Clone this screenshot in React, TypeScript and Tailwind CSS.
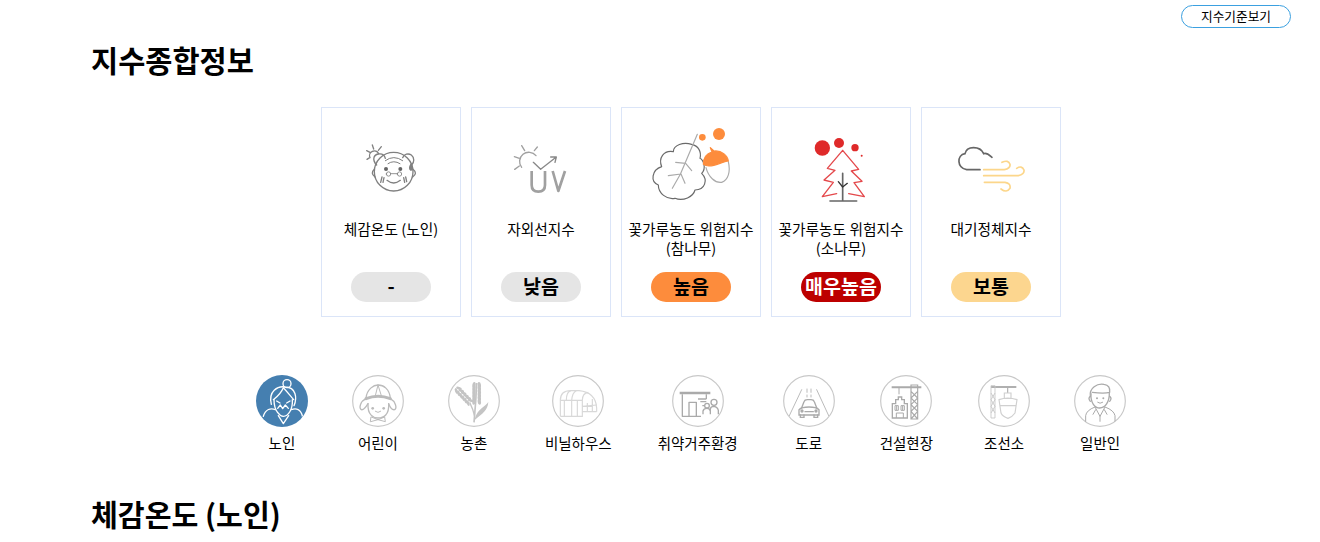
import type { ReactNode } from 'react'

const FONT = "font-['Noto_Sans_CJK_KR','Noto_Sans',sans-serif]"

function ElderFace() {
  return (
    <svg width="120" height="80" viewBox="33 60 360 240" fill="none" stroke="#808080" strokeWidth="4" strokeLinecap="round" strokeLinejoin="round">
      <circle cx="221" cy="200" r="58" />
      <path d="M170 180C156 165 160 150 175 147C188 145 194 152 196 160" />
      <path d="M248 158C252 147 265 144 274 150C284 158 283 172 275 180" />
      <path d="M196 167Q221 148 248 167M204 176Q221 164 240 176" strokeWidth="3" />
      <path d="M163 193Q150 205 165 216M279 193Q294 205 278 216" />
      <path d="M150 158A14 14 0 0 1 176 146M140 137L150 142M157 120L161 132M184 125L175 136M141 163L150 157" />
      <path d="M273 177Q265 190 273 196Q281 190 273 177Z" fill="#808080" />
      <circle cx="198" cy="192" r="6" fill="#666" stroke="none" />
      <circle cx="241" cy="192" r="6" fill="#666" stroke="none" />
      <path d="M199 207A6 6 0 0 1 212 207A6 6 0 0 1 199 207ZM232 207A6 6 0 0 1 245 207A6 6 0 0 1 232 207ZM212 206H232" strokeWidth="2.5" />
      <path d="M201 226Q221 242 241 226M186 216L182 232M192 218L189 232M251 218L254 232M257 216L260 230" />
    </svg>
  )
}

function UvSun() {
  return (
    <svg width="120" height="80" viewBox="483 60 360 240" fill="none" stroke="#a0a0a0" strokeWidth="4" strokeLinecap="round" strokeLinejoin="round">
      <path d="M605 187A26 26 0 0 1 648 152" />
      <path d="M605 122L614 137M652 126L643 137M583 155L598 160M584 193L598 183" />
      <path d="M640 172L662 193L708 157M692 156H709L705 172" stroke="#888" />
      <path d="M635 198V240Q635 260 655 260Q675 260 675 240V198M698 198L715 258L735 198" strokeWidth="8" strokeLinecap="butt" />
    </svg>
  )
}

function OakLeaf() {
  return (
    <svg width="120" height="80" viewBox="33 60 360 240" fill="none" stroke="#777" strokeWidth="3.5" strokeLinecap="round" strokeLinejoin="round">
      <path d="M215 118C190 110 160 120 160 140C130 135 115 160 125 185C95 195 90 230 115 240C115 265 140 285 165 280C190 290 220 275 225 255C255 255 265 225 245 205C260 190 250 165 240 160C245 140 235 122 215 118Z" stroke="#6a6a6a" fill="#fff" />
      <path d="M232 88L181 208L157 250M167 172L197 175L215 197M145 212L183 207L195 235" stroke="#aaa" />
      <path d="M258 188C265 215 285 235 305 232C325 225 332 200 325 170" stroke="#aaa" fill="#fff" />
      <path d="M250 178C250 155 262 145 276 141L271 128L282 138C305 135 323 152 325 168C300 172 270 192 250 178Z" fill="#fd8c3c" stroke="#fd8c3c" />
      <circle cx="297" cy="87" r="18" fill="#fd8c3c" stroke="none" />
      <circle cx="247" cy="97" r="10" fill="#fd8c3c" stroke="none" />
    </svg>
  )
}

function PineTree() {
  return (
    <svg width="120" height="80" viewBox="483 60 360 240" fill="none" strokeLinecap="round" strokeLinejoin="round">
      <circle cx="607" cy="129" r="23" fill="#df2a2a" />
      <circle cx="657" cy="114" r="15" fill="#df2a2a" />
      <circle cx="705" cy="128" r="11" fill="#df2a2a" />
      <circle cx="725" cy="152" r="3" fill="#df2a2a" />
      <path d="M668 136L716 193L694 198L726 229L702 233L733 275L686 266M650 266L607 275L640 232L612 225L645 196L622 190L668 136" stroke="#e4484b" strokeWidth="4" />
      <path d="M668 205V288M630 288H710" stroke="#666" strokeWidth="5" />
      <path d="M655 230L668 246L682 235" stroke="#333" strokeWidth="4" />
    </svg>
  )
}

function WindCloud() {
  return (
    <svg width="120" height="80" viewBox="48 60 360 240" fill="none" strokeWidth="5" strokeLinecap="round">
      <path d="M195 194H155C125 190 125 150 150 146C155 122 195 122 206 146C216 142 225 152 231 157" stroke="#666" />
      <path d="M206 194H268Q287 190 285 178Q280 163 261 172M206 212H310Q329 208 327 195Q320 180 305 190M208 232H270Q288 235 285 250Q275 265 258 252" stroke="#fcd68a" />
    </svg>
  )
}

const CARDS: { label: ReactNode; grade: string; pill: string; icon: ReactNode }[] = [
  { label: '체감온도 (노인)', grade: '-', pill: 'bg-[#e5e5e5] text-black', icon: <ElderFace /> },
  { label: '자외선지수', grade: '낮음', pill: 'bg-[#e5e5e5] text-black', icon: <UvSun /> },
  { label: <>꽃가루농도 위험지수<br />(참나무)</>, grade: '높음', pill: 'bg-[#fd8c3c] text-black', icon: <OakLeaf /> },
  { label: <>꽃가루농도 위험지수<br />(소나무)</>, grade: '매우높음', pill: 'bg-[#bd0000] text-white', icon: <PineTree /> },
  { label: '대기정체지수', grade: '보통', pill: 'bg-[#fcd68f] text-black', icon: <WindCloud /> },
]

function Elder() {
  return (
    <g stroke="#fff" strokeWidth="4" fill="none" strokeLinecap="round" strokeLinejoin="round">
      <circle cx="123" cy="52" r="12" />
      <path d="M76 114C66 75 95 58 118 62C150 62 154 95 144 118" />
      <path d="M112 64C105 82 92 92 82 100M112 64C124 76 134 90 143 100" />
      <path d="M84 100C84 135 103 150 112 150C126 150 141 130 139 100" />
      <path d="M92 104L102 110M132 104L122 110" />
      <path d="M95 126L103 116L110 127L118 116L127 126" />
      <path d="M52 150C58 128 75 124 88 130M170 152C165 128 150 124 136 130M97 148L112 172L128 148" />
    </g>
  )
}

function Child() {
  return (
    <g stroke="#bbb" strokeWidth="4" fill="none" strokeLinecap="round" strokeLinejoin="round">
      <path d="M362 95C365 68 385 56 398 56C415 56 432 68 435 95" />
      <path d="M398 56L390 88M398 56L408 88" strokeWidth="3" />
      <path d="M362 97Q398 82 435 97" strokeWidth="9" />
      <path d="M362 97C345 105 340 125 348 130C355 132 362 122 368 112M435 97C450 105 456 125 448 130C440 132 434 122 430 112" />
      <path d="M368 112C366 146 385 155 398 155C415 155 432 145 430 112" />
      <circle cx="382" cy="126" r="4" fill="#bbb" stroke="none" />
      <circle cx="415" cy="126" r="4" fill="#bbb" stroke="none" />
      <path d="M390 135Q398 142 406 135" strokeWidth="3" />
      <path d="M378 152L398 160L418 152L420 166L398 160L376 166Z" strokeWidth="3" />
    </g>
  )
}

function Wheat() {
  const steps = [0, 1, 2, 3, 4, 5]
  return (
    <g fill="#c4c4c4" stroke="none">
      <path d="M689 168C692 135 695 105 697 50" stroke="#c4c4c4" strokeWidth="5" fill="none" />
      {steps.map((i) => (
        <g key={i}>
          <ellipse cx={689} cy={56 + i * 10} rx="5" ry="9" transform={`rotate(8 689 ${56 + i * 10})`} />
          <ellipse cx={705} cy={56 + i * 10} rx="5" ry="9" transform={`rotate(-8 705 ${56 + i * 10})`} />
          <ellipse cx={640 + i * 7 + 4} cy={70 + i * 7.3 - 4} rx="9" ry="4" transform={`rotate(20 ${644 + i * 7} ${66 + i * 7.3})`} />
          <ellipse cx={640 + i * 7 - 4} cy={70 + i * 7.3 + 4} rx="9" ry="4" transform={`rotate(70 ${636 + i * 7} ${74 + i * 7.3})`} />
        </g>
      ))}
      <path d="M676 108C682 120 688 135 691 150" stroke="#c4c4c4" strokeWidth="4" fill="none" />
      <path d="M692 155C702 126 722 122 732 107C730 132 714 142 692 160Z" />
    </g>
  )
}

function Greenhouse() {
  return (
    <g stroke="#d8d8d8" strokeWidth="3.5" fill="none">
      <path d="M94 150V102Q94 73 125 73H150Q200 78 203 125V136" />
      <path d="M94 102H160V150H94M106 102V150M126 73Q112 76 112 102M142 73Q130 78 128 102M128 102V150M145 102V150M160 102Q160 80 178 78M160 120L203 116M160 136H203M175 110V136M190 98V136" />
    </g>
  )
}

function Housing() {
  return (
    <g stroke="#aaa" strokeWidth="4" fill="none" strokeLinejoin="round">
      <path d="M450 80H542" strokeWidth="8" />
      <path d="M458 84V150H514M478 150V108H500V150M505 98H530M512 106H530M518 118H526M530 84V98" />
      <circle cx="532" cy="118" r="7" />
      <circle cx="553" cy="108" r="9" />
      <path d="M520 144V134Q522 126 532 126Q540 126 542 134V144M542 144V128Q543 120 553 120Q564 122 566 132V144" />
    </g>
  )
}

function Road() {
  return (
    <g stroke="#aaa" strokeWidth="4" fill="none" strokeLinecap="round">
      <path d="M778 148L815 70M896 148L860 70M831 68V78M843 68V78M831 86V92M843 86V92" stroke="#bbb" strokeWidth="3" />
      <path d="M815 124L822 106Q824 100 832 100H843Q851 100 853 106L860 124" />
      <path d="M807 130Q815 122 837 122Q859 122 867 130V146H807Z" />
      <path d="M811 146V153H822V146M852 146V153H863V146M825 136H850" />
      <circle cx="816" cy="134" r="3" fill="#aaa" />
      <circle cx="858" cy="134" r="3" fill="#aaa" />
    </g>
  )
}

function Crane() {
  return (
    <g stroke="#aaa" strokeWidth="4" fill="none">
      <path d="M98 63H187" strokeWidth="6" />
      <path d="M120 65V84" strokeWidth="3" />
      <path d="M156 56H176V158H156ZM156 75L176 95L156 115L176 135L156 158M176 75L156 95L176 115L156 135L176 158" strokeWidth="3.5" />
      <path d="M100 112H110V100H118V92H128V100H136V112H145V155H100Z" />
      <path d="M108 118H118V132H108ZM126 118H136V132H126ZM113 118V132M131 118V132M112 155V140H133V155" strokeWidth="3" />
    </g>
  )
}

function Shipyard() {
  return (
    <g stroke="#d0d0d0" strokeWidth="3.5" fill="none">
      <path d="M392 62H468" strokeWidth="6" stroke="#b0b0b0" />
      <path d="M392 58H404V155H392ZM392 80L404 100L392 120L404 140M404 80L392 100L404 120L392 140" stroke="#c4c4c4" strokeWidth="2.5" />
      <path d="M442 64V80" stroke="#b0b0b0" />
      <path d="M432 80H452V96H432ZM416 100Q442 90 470 100L464 140Q456 152 443 156Q426 150 422 140ZM420 118H466" />
    </g>
  )
}

function Person() {
  return (
    <g stroke="#aaa" strokeWidth="4" fill="none" strokeLinecap="round" strokeLinejoin="round">
      <path d="M694 90C690 65 715 50 735 54C748 56 754 64 752 78C738 82 715 80 700 78" />
      <path d="M696 82C694 110 708 125 722 125C738 125 752 108 751 78" />
      <path d="M694 90Q686 95 694 105M752 90Q760 95 752 105" />
      <circle cx="714" cy="96" r="3" fill="#aaa" stroke="none" />
      <circle cx="733" cy="96" r="3" fill="#aaa" stroke="none" />
      <path d="M716 108Q723 114 731 108" strokeWidth="3" />
      <path d="M680 165V148Q682 132 708 122L723 150L738 122Q765 132 768 148V165M710 130L702 144M736 130L744 144M723 150V165" strokeWidth="3" />
    </g>
  )
}

const TARGETS: { name: string; view: string; icon: ReactNode }[] = [
  { name: '노인', view: '30 26 156 156', icon: <Elder /> },
  { name: '어린이', view: '320 26 156 156', icon: <Child /> },
  { name: '농촌', view: '611 26 156 156', icon: <Wheat /> },
  { name: '비닐하우스', view: '69 26 156 156', icon: <Greenhouse /> },
  { name: '취약거주환경', view: '427 26 156 156', icon: <Housing /> },
  { name: '도로', view: '759 26 156 156', icon: <Road /> },
  { name: '건설현장', view: '63 26 156 156', icon: <Crane /> },
  { name: '조선소', view: '353 26 156 156', icon: <Shipyard /> },
  { name: '일반인', view: '645 26 156 156', icon: <Person /> },
]

function Target({ name, view, icon, active }: { name: string; view: string; icon: ReactNode; active: boolean }) {
  const [x, y] = view.split(' ').map(Number)
  return (
    <div className="flex min-w-[76px] flex-col items-center px-3">
      <svg width="52" height="52" viewBox={view} className="shrink-0">
        <defs>
          <clipPath id={`clip-${name}`}>
            <circle cx={x + 78} cy={y + 78} r="77" />
          </clipPath>
        </defs>
        <circle
          cx={x + 78}
          cy={y + 78}
          r={active ? 78 : 76}
          fill={active ? '#457fb0' : '#fff'}
          stroke={active ? 'none' : '#c8c8c8'}
          strokeWidth="3.5"
        />
        <g clipPath={`url(#clip-${name})`}>{icon}</g>
      </svg>
      <span className="mt-[6px] whitespace-nowrap px-px text-[14.5px] leading-[20px] text-black">{name}</span>
    </div>
  )
}

export default function App() {
  return (
    <div className={`h-[542px] overflow-hidden bg-white ${FONT}`}>
      <div className="ml-[91px] flex w-[1200px] flex-col">
        <button className="mt-[5px] h-[23px] w-[110px] self-end rounded-full border border-[#3ba0e0] text-[12.7px] leading-none text-black">
          지수기준보기
        </button>
        <h1 className="mt-[11px] text-[29.5px] font-bold leading-[40px] text-black">지수종합정보</h1>

        <div className="mt-[28px] flex justify-center gap-[10px]">
          {CARDS.map((card, i) => (
            <div key={i} className="flex h-[210px] w-[140px] flex-col items-center border border-[#dbe5f8] bg-white">
              <div className="mt-[17px] h-[80px] w-[120px]">{card.icon}</div>
              <p className="mt-[14px] h-[40px] whitespace-nowrap text-center text-[14.7px] leading-[19px] text-black">{card.label}</p>
              <div className={`mt-[13px] flex h-[30px] w-[80px] items-center justify-center rounded-full pb-[2px] text-[19.5px] font-bold leading-none ${card.pill}`}>
                {card.grade}
              </div>
            </div>
          ))}
        </div>

        <div className="mt-[58px] flex justify-center gap-5">
          {TARGETS.map((t, i) => (
            <Target key={t.name} name={t.name} view={t.view} icon={t.icon} active={i === 0} />
          ))}
        </div>

        <h2 className="mt-[40px] text-[29.2px] font-bold leading-[40px] text-black">체감온도 (노인)</h2>
      </div>
    </div>
  )
}
